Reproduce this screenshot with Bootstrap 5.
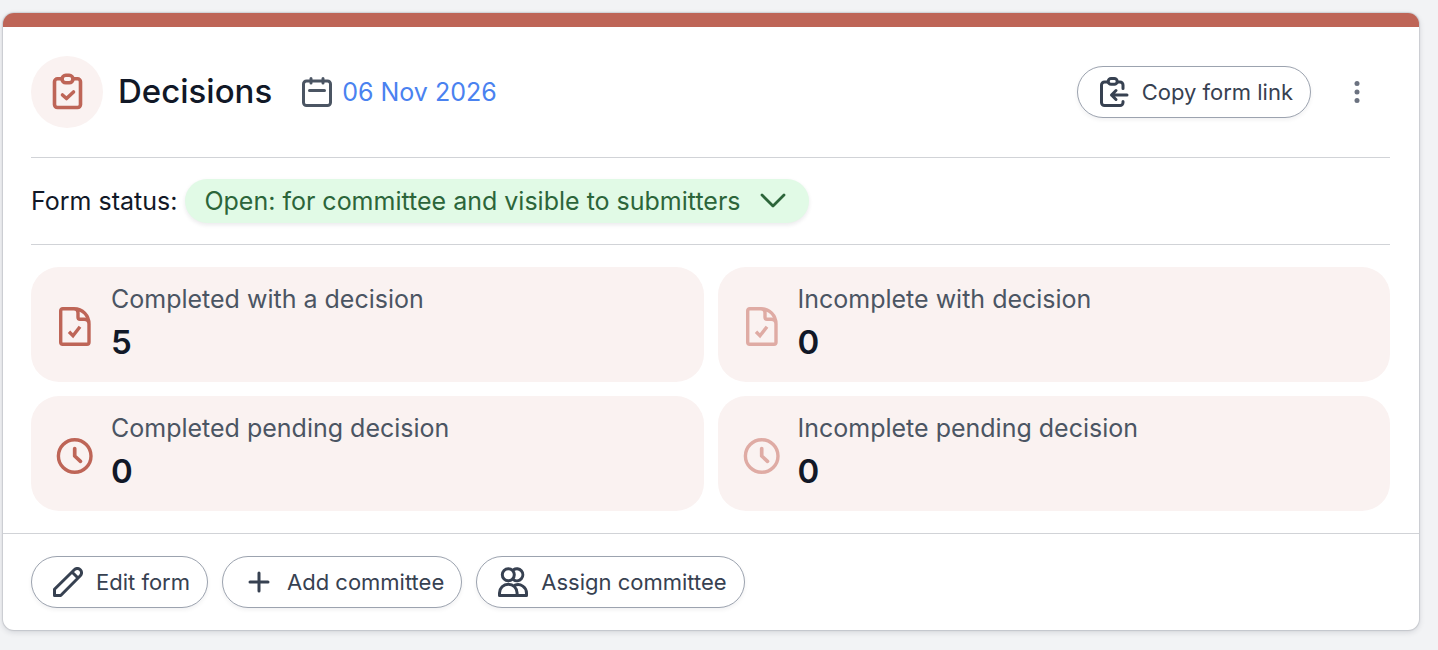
<!DOCTYPE html>
<html lang="en">
<head>
<meta charset="utf-8">
<meta name="viewport" content="width=device-width, initial-scale=1">
<title>Decisions</title>
<link href="https://cdn.jsdelivr.net/npm/bootstrap@5.3.0/dist/css/bootstrap.min.css" rel="stylesheet">
<style>
  :root { --accent: #be6557; --tint: #faf2f1; --ink: #111827; --slate: #4b5563; --rule: #d1d3d7; --btn: #374151; }
  body { background: #f2f3f5; color: var(--ink); font-family: Inter, "Liberation Sans", sans-serif; font-size: 25px; line-height: 36px; }
  main { padding: 13px 19px 20px 3px; }
  svg { fill: none; stroke: currentColor; stroke-width: 3; stroke-linecap: round; stroke-linejoin: round; flex: none; display: block; }
  .panel { border: 0; border-top: 14px solid var(--accent); border-radius: 11px; color: var(--ink); box-shadow: 0 0 1px 1px rgba(17,24,39,.12), 0 2px 6px rgba(17,24,39,.14); }
  .panel-main { padding: 0 29px 22px 28px; }
  .panel-head { padding: 29px 0; border-bottom: 1px solid var(--rule); }
  .emblem { width: 72px; height: 72px; background: var(--tint); color: var(--accent); margin-right: 15px; }
  .emblem svg { stroke-width: 3.6; }
  .panel-name { font-size: 33px; line-height: 38px; font-weight: 500; margin: 0 30px 2px 0; }
  .date-link { color: #4a82f0; text-decoration: none; }
  .date-icon { color: var(--slate); margin-right: 10px; }
  .status-row { padding: 21px 0; border-bottom: 1px solid var(--rule); margin-bottom: 22px; gap: 8px; }
  .status-pick { width: auto; height: 44px; padding: 0 68px 0 19px; border: 0; border-radius: 22px; font-size: 25px; line-height: 44px; color: #2c653a; background-color: #e1fae6;
    background-image: url("data:image/svg+xml,%3Csvg xmlns='http://www.w3.org/2000/svg' viewBox='0 0 26 16'%3E%3Cpath d='M2 2l11 11L24 2' fill='none' stroke='%232c653a' stroke-width='2.8' stroke-linecap='round' stroke-linejoin='round'/%3E%3C/svg%3E");
    background-size: 26px 16px; background-position: right 23px center; box-shadow: 0 2px 4px rgba(17,24,39,.09); }
  .tiles { --bs-gutter-x: 14px; --bs-gutter-y: 14px; }
  .tile { background: var(--tint); border-radius: 28px; padding: 17px 25px 13px; gap: 17px; color: var(--accent); }
  .tile svg { stroke-width: 3.4; }
  .tile.faded { color: #dfaba4; }
  .tile dt { color: var(--slate); font-weight: 400; line-height: 31px; }
  .tile dd { color: var(--ink); font-size: 33px; font-weight: 600; line-height: 54px; margin: 0; }
  .panel-foot { border-top: 1px solid var(--rule); padding: 22px 28px; gap: 14px; }
  .pill { height: 52px; border: 1px solid #9ca3af; border-radius: 26px; padding: 0 17px 0 21px; gap: 13px; color: var(--btn); background: #fff; font-size: 22px; line-height: 32px; box-shadow: 0 2px 4px rgba(17,24,39,.06); }
  .kebab { width: 66px; height: 52px; margin-left: 13px; border: 0; color: #6b7280; }
</style>
</head>
<body>
<main>
  <section class="card panel">
    <div class="panel-main">
      <header class="panel-head d-flex align-items-center">
        <span class="emblem rounded-circle d-flex align-items-center justify-content-center">
          <svg width="40" height="40" viewBox="0 0 40 40" aria-hidden="true"><path d="M15 6.800h-4.500a3 3 0 0 0-3 3v22.700a3 3 0 0 0 3 3h20a3 3 0 0 0 3-3V9.800a3 3 0 0 0-3-3H26"/><rect x="15" y="3.300" width="11" height="7.500" rx="3.750"/><path d="M15.500 23l4 3.500 7-6.500"/></svg>
        </span>
        <h1 class="panel-name">Decisions</h1>
        <svg class="date-icon" width="30" height="32" viewBox="0 0 30 32" aria-hidden="true"><rect x="1.500" y="5" width="27" height="24.500" rx="3"/><path d="M9 2.500V7M21 2.500V7M7.500 14.500h15"/></svg>
        <a class="date-link" href="#date">06 Nov 2026</a>
        <button type="button" class="btn pill d-flex align-items-center ms-auto">
          <svg width="30" height="30" viewBox="0 0 30 30" aria-hidden="true"><path d="M9 5H5.500a3 3 0 0 0-3 3v17.500a3 3 0 0 0 3 3H21a3 3 0 0 0 3-3v-1M18.500 5H21a3 3 0 0 1 3 3v3.500"/><rect x="9.200" y="1.500" width="9" height="5.800" rx="2.900"/><path d="M28 18H12.500M17 13.500L12.500 18l4.500 4.500"/></svg>
          Copy form link
        </button>
        <button type="button" class="btn kebab p-0 d-flex align-items-center justify-content-center" aria-label="More actions">
          <svg width="6" height="24" viewBox="0 0 6 24" aria-hidden="true"><g fill="currentColor" stroke="none"><circle cx="3" cy="3.500" r="2.500"/><circle cx="3" cy="12" r="2.500"/><circle cx="3" cy="20.500" r="2.500"/></g></svg>
        </button>
      </header>

      <div class="status-row d-flex align-items-center">
        <label for="status">Form status:</label>
        <select id="status" class="form-select status-pick">
          <option>Open: for committee and visible to submitters</option>
        </select>
      </div>

      <div class="row row-cols-2 tiles">
        <div class="col">
          <div class="tile d-flex align-items-center">
            <svg width="38" height="40" viewBox="0 0 38 40" aria-hidden="true"><path d="M18 1.700H6.700a2 2 0 0 0-2 2v31.600a2 2 0 0 0 2 2H31a2 2 0 0 0 2-2V17C33 8.500 26.500 1.700 18 1.700c2.500 0 4 1.500 4 4v4.500a2 2 0 0 0 2 2h4.300c3 0 4.700 1.800 4.700 4.800"/><path d="M13 24.700l4 4 7-9" stroke-linecap="butt" stroke-linejoin="miter"/></svg>
            <dl class="m-0"><dt>Completed with a decision</dt><dd>5</dd></dl>
          </div>
        </div>
        <div class="col">
          <div class="tile faded d-flex align-items-center">
            <svg width="38" height="40" viewBox="0 0 38 40" aria-hidden="true"><path d="M18 1.700H6.700a2 2 0 0 0-2 2v31.600a2 2 0 0 0 2 2H31a2 2 0 0 0 2-2V17C33 8.500 26.500 1.700 18 1.700c2.500 0 4 1.500 4 4v4.500a2 2 0 0 0 2 2h4.300c3 0 4.700 1.800 4.700 4.800"/><path d="M13 24.700l4 4 7-9" stroke-linecap="butt" stroke-linejoin="miter"/></svg>
            <dl class="m-0"><dt>Incomplete with decision</dt><dd>0</dd></dl>
          </div>
        </div>
        <div class="col">
          <div class="tile d-flex align-items-center">
            <svg width="38" height="40" viewBox="0 0 38 40" aria-hidden="true"><circle cx="18.700" cy="20" r="16.300"/><path d="M18.700 12.500V20l5.800 5.300" stroke-width="3.700"/></svg>
            <dl class="m-0"><dt>Completed pending decision</dt><dd>0</dd></dl>
          </div>
        </div>
        <div class="col">
          <div class="tile faded d-flex align-items-center">
            <svg width="38" height="40" viewBox="0 0 38 40" aria-hidden="true"><circle cx="18.700" cy="20" r="16.300"/><path d="M18.700 12.500V20l5.800 5.300" stroke-width="3.700"/></svg>
            <dl class="m-0"><dt>Incomplete pending decision</dt><dd>0</dd></dl>
          </div>
        </div>
      </div>
    </div>

    <footer class="panel-foot d-flex flex-wrap">
      <button type="button" class="btn pill d-flex align-items-center">
        <svg width="30" height="30" viewBox="0 0 30 30" aria-hidden="true"><path d="M1.500 28.500V22.300L21.300 2.700a4.200 4.200 0 0 1 6 6L7.700 28.500zM19 5l6 6"/></svg>
        Edit form
      </button>
      <button type="button" class="btn pill d-flex align-items-center">
        <svg width="30" height="30" viewBox="0 0 30 30" aria-hidden="true"><path d="M15 6v18M6 15h18"/></svg>
        Add committee
      </button>
      <button type="button" class="btn pill d-flex align-items-center">
        <svg width="30" height="30" viewBox="0 0 30 30" aria-hidden="true"><circle cx="10.300" cy="7.800" r="6"/><path d="M15.500 2.800a6 6 0 1 1 0 10"/><path d="M1.500 28.500v-2.500a8.800 8.800 0 0 1 17.600 0v2.500zM17 18.200a8.500 8.500 0 0 1 11.500 7.800v2.500H19"/></svg>
        Assign committee
      </button>
    </footer>
  </section>
</main>
<script src="https://cdn.jsdelivr.net/npm/bootstrap@5.3.0/dist/js/bootstrap.bundle.min.js"></script>
</body>
</html>
